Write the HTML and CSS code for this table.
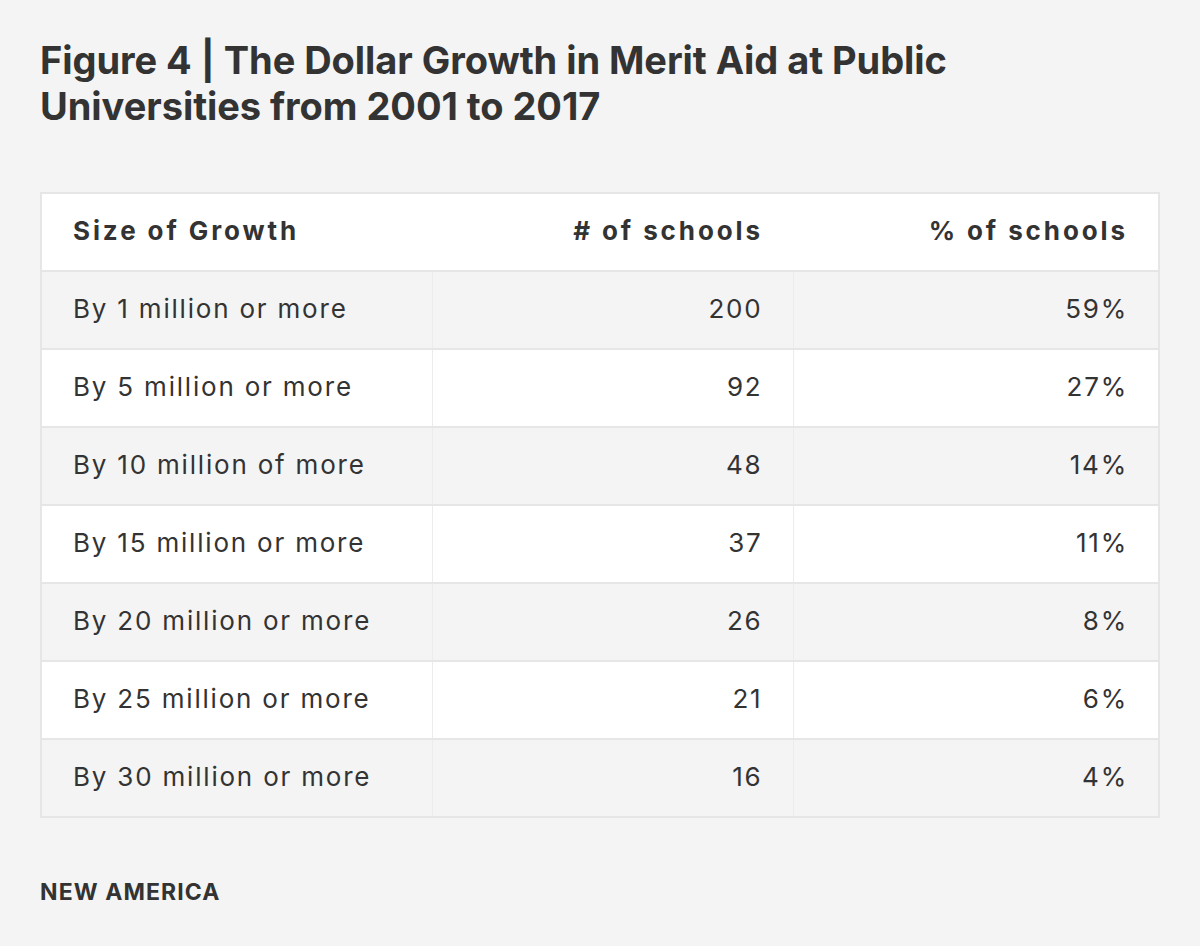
FILE: index.html
```html
<!DOCTYPE html>
<html>
<head>
<meta charset="utf-8">
<link rel="stylesheet" href="styles.css">
</head>
<body>
<div class="page">
  <h1 class="title">Figure 4 | The Dollar Growth in Merit Aid at Public Universities from 2001 to 2017</h1>
  <table class="data">
    <thead>
      <tr><th class="c1">Size of Growth</th><th class="c2"># of schools</th><th class="c3">% of schools</th></tr>
    </thead>
    <tbody>
      <tr><td class="c1">By 1 million or more</td><td class="c2">200</td><td class="c3">59%</td></tr>
      <tr><td class="c1">By 5 million or more</td><td class="c2">92</td><td class="c3">27%</td></tr>
      <tr><td class="c1">By 10 million of more</td><td class="c2">48</td><td class="c3">14%</td></tr>
      <tr><td class="c1">By 15 million or more</td><td class="c2">37</td><td class="c3">11%</td></tr>
      <tr><td class="c1">By 20 million or more</td><td class="c2">26</td><td class="c3">8%</td></tr>
      <tr><td class="c1">By 25 million or more</td><td class="c2">21</td><td class="c3">6%</td></tr>
      <tr><td class="c1">By 30 million or more</td><td class="c2">16</td><td class="c3">4%</td></tr>
    </tbody>
  </table>
  <div class="brand">NEW AMERICA</div>
</div>
</body>
</html>
```
FILE: styles.css
```css
html, body {
  margin: 0;
  padding: 0;
  background: #f4f4f4;
}
body {
  font-family: Inter, "Noto Sans", sans-serif;
  color: #333333;
}
.page {
  padding: 37px 40px 0 40px;
}
.title {
  margin: 0;
  font-size: 38px;
  line-height: 46px;
  font-weight: 700;
  letter-spacing: -0.05px;
  max-width: 950px;
}
.data {
  margin-top: 63px;
  width: 1120px;
  border-collapse: collapse;
  border: 2px solid #e6e6e6;
  background: #ffffff;
}
.data th, .data td {
  height: 78px;
  padding: 0 32px 4px 31px;
  font-size: 26px;
  box-sizing: border-box;
}
.data th {
  font-weight: 700;
  letter-spacing: 2.9px;
  background: #ffffff;
  border-bottom: 2px solid #e6e6e6;
}
.data td {
  font-weight: 400;
  letter-spacing: 1.8px;
  border-bottom: 2px solid #e6e6e6;
  border-left: 1px solid #ececec;
}
.data th.c2, .data th.c3, .data td.c2, .data td.c3 {
  padding-right: 30px;
}
.data td.c1 { border-left: none; }
.data tbody tr:nth-child(odd) td { background: #f4f4f4; }
.data tbody tr:nth-child(even) td { background: #ffffff; }
.c1 { text-align: left; width: 391px; }
.c2 { text-align: right; width: 361px; }
.c3 { text-align: right; }
.brand {
  margin-top: 60px;
  font-size: 23px;
  font-weight: 700;
  letter-spacing: 1.1px;
}
```
